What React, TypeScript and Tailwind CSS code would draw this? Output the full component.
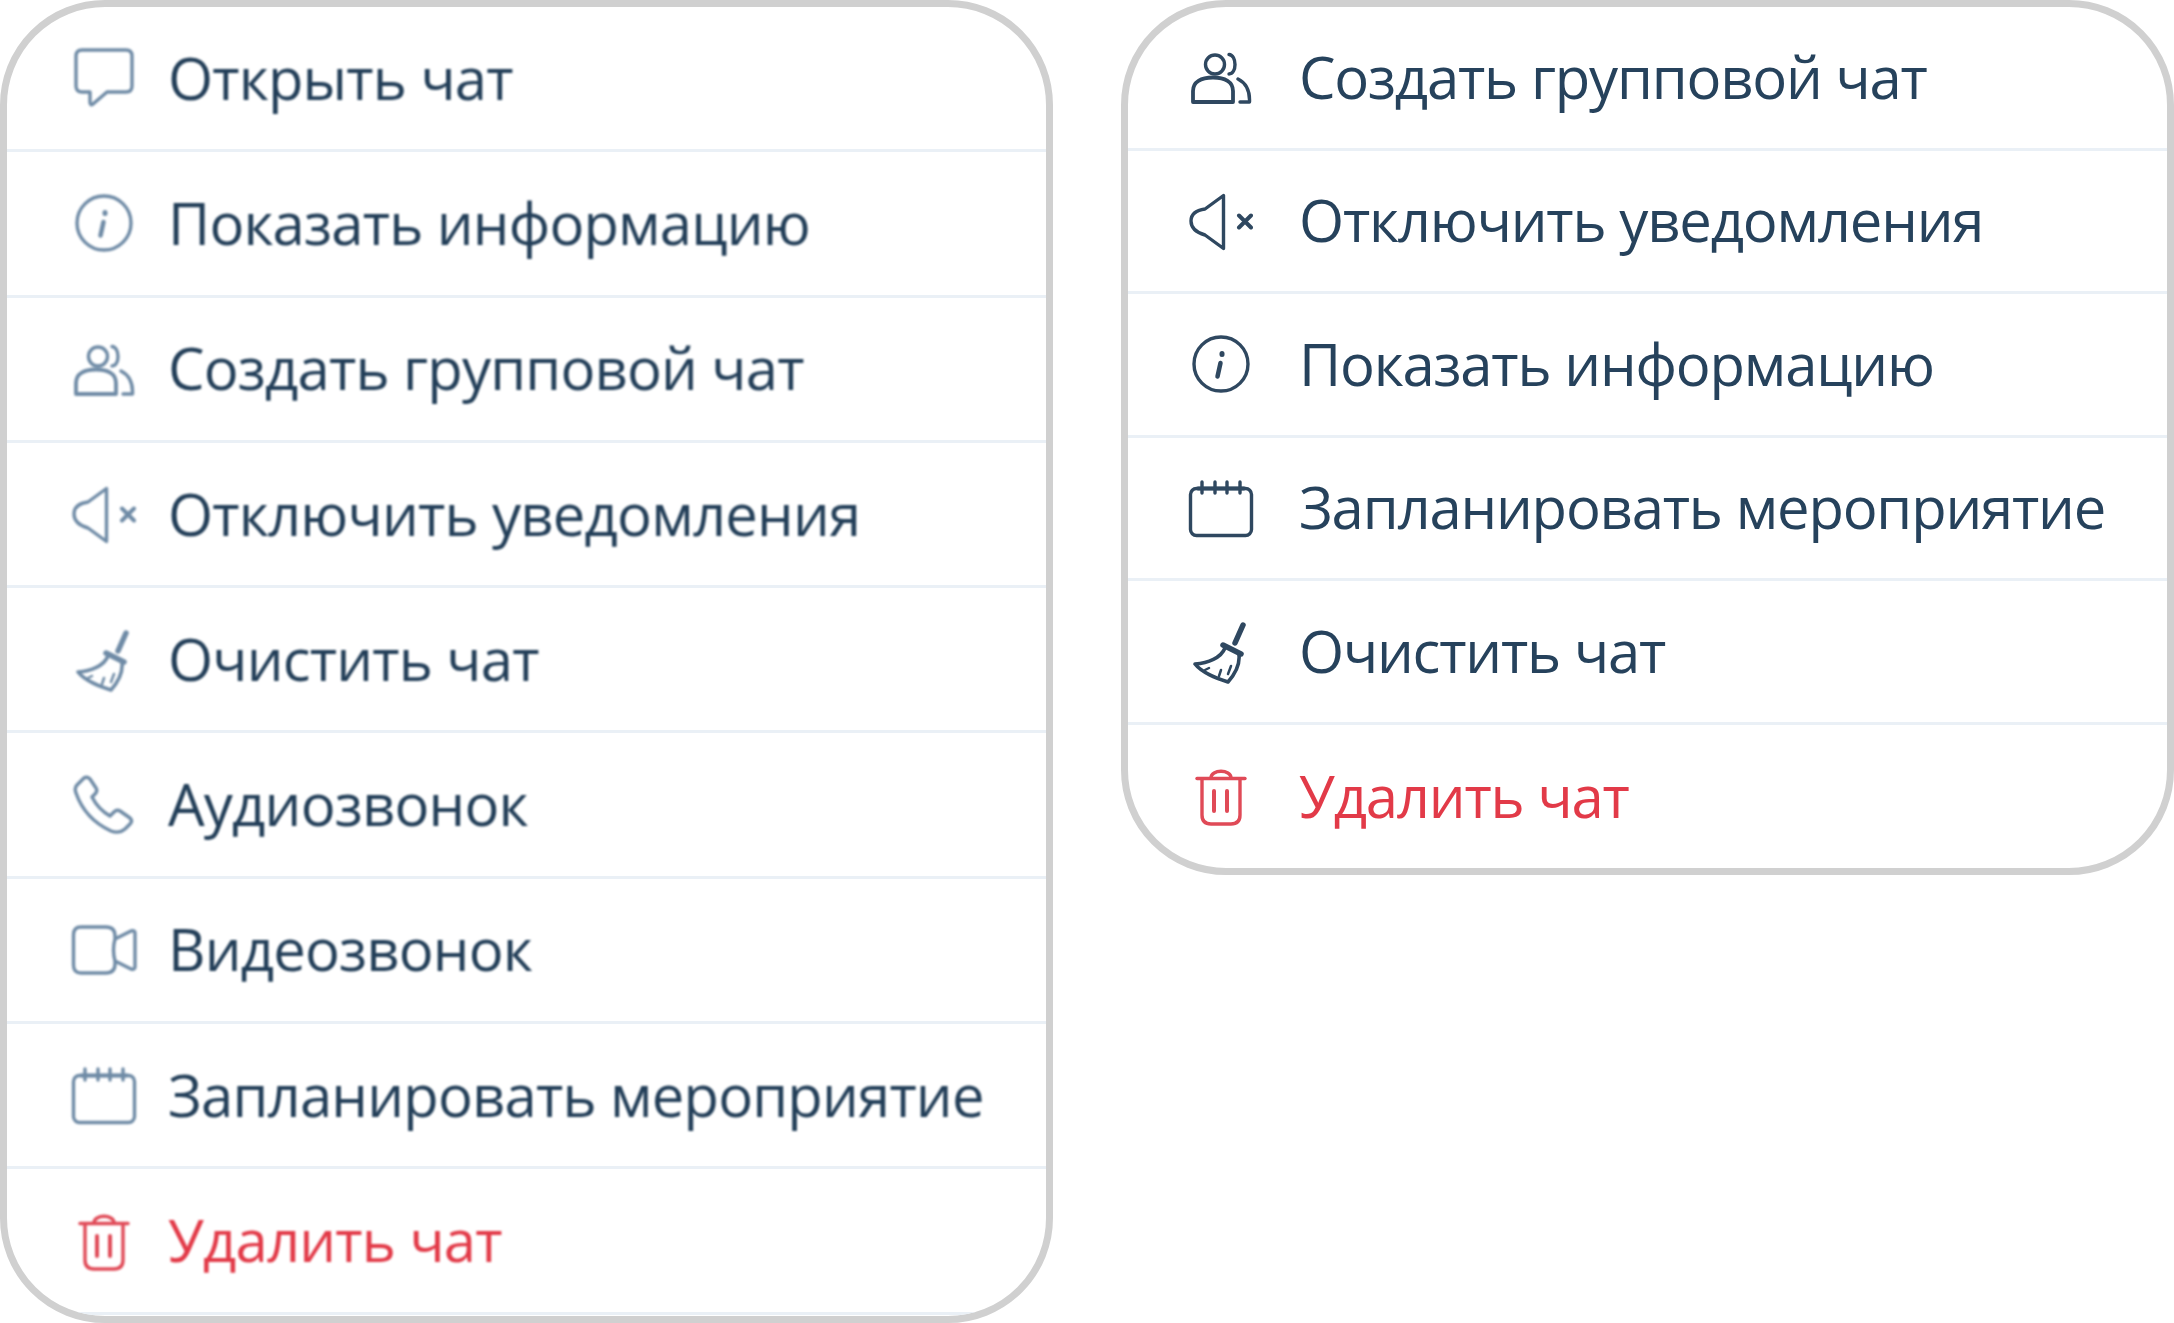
import React from "react";

type IconName = "chat" | "info" | "users" | "mute" | "broom" | "phone" | "video" | "calendar" | "trash";

function Glyph({ name }: { name: IconName }) {
  switch (name) {
    case "chat":
      return <path d="M11 5H55Q61 5 61 11V41Q61 47 55 47H36L22 59Q19 61 19 57V47H11Q5 47 5 41V11Q5 5 11 5Z" />;
    case "info":
      return (
        <>
          <circle cx="33" cy="33" r="27" />
          <path d="M32.5 32 29.5 45.5" strokeWidth="4.5" />
          <path d="M34 22.5v1" strokeWidth="5" />
        </>
      );
    case "users":
      return (
        <>
          <circle cx="27" cy="20.5" r="9.5" />
          <path d="M41 10.5C49 11 49 30 41 30" />
          <path d="M5 58V47C5 38 13 33.5 25 33.5S45 38 45 47V58Z" strokeWidth="3.8" />
          <path d="M50 35C58 39 62 47 61.5 58H52" />
        </>
      );
    case "mute":
      return (
        <>
          <path d="M35.5 7.5V60.5L17 47Q3 43 3 33T17 21Z" />
          <path d="M51 27.5 63 39.5M63 27.5 51 39.5" strokeWidth="4" />
        </>
      );
    case "broom":
      return (
        <>
          <path d="M55 7 47 25" strokeWidth="5.5" />
          <path d="M35 27 53 36" strokeWidth="5.5" />
          <path d="M37 30C33 40 20 45 7 46C14 55 28 60 40 64C47 56 52 47 51 37" strokeWidth="3.6" />
          <path d="M21 50 17 52M33 52 31 58M43 48 40 56" strokeWidth="2.5" />
        </>
      );
    case "phone":
      return <path d="M6 13 13 6Q16 4 19 7L25 16Q27 19 24 22L21 25Q27 37 39 44L43 40Q46 37 49 39L59 46Q62 49 59 52L54 57Q48 62 40 59Q14 47 5 21Q3 16 6 13Z" />;
    case "video":
      return (
        <path d="M10 10H35Q44 10 44 19V22L60 14Q64 13 64 16V50Q64 53 60 52L44 44V47Q44 56 35 56H10Q2.5 56 2.5 48V18Q2.5 10 10 10ZM44 22Q41 33 44 44" />
      );
    case "calendar":
      return (
        <>
          <rect x="2.5" y="13.5" width="61" height="47" rx="6" />
          <path d="M14 7V18M27 7V18M39 7V18M52 7V18" />
          <path d="M10 13.5H56" strokeWidth="4" />
        </>
      );
    case "trash":
      return (
        <>
          <path d="M9 15.5H57" />
          <path d="M23 15C23 6 43 6 43 15" />
          <path d="M14 16V52Q14 61 23 61H43Q52 61 52 52V16" />
          <path d="M26 28V48M39 28V48" strokeWidth="4" />
        </>
      );
  }
}

function Icon({ name, color }: { name: IconName; color: string }) {
  return (
    <svg
      viewBox="0 0 66 66"
      fill="none"
      stroke={color}
      strokeWidth="3.4"
      strokeLinecap="round"
      strokeLinejoin="round"
      className="w-[66px] h-[66px] shrink-0"
    >
      <Glyph name={name} />
    </svg>
  );
}

type Item = { icon: IconName; label: string; danger?: boolean };

const leftItems: Item[] = [
  { icon: "chat", label: "Открыть чат" },
  { icon: "info", label: "Показать информацию" },
  { icon: "users", label: "Создать групповой чат" },
  { icon: "mute", label: "Отключить уведомления" },
  { icon: "broom", label: "Очистить чат" },
  { icon: "phone", label: "Аудиозвонок" },
  { icon: "video", label: "Видеозвонок" },
  { icon: "calendar", label: "Запланировать мероприятие" },
  { icon: "trash", label: "Удалить чат", danger: true },
];

const rightItems: Item[] = [
  { icon: "users", label: "Создать групповой чат" },
  { icon: "mute", label: "Отключить уведомления" },
  { icon: "info", label: "Показать информацию" },
  { icon: "calendar", label: "Запланировать мероприятие" },
  { icon: "broom", label: "Очистить чат" },
  { icon: "trash", label: "Удалить чат", danger: true },
];

export default function App() {
  return (
    <div className="w-[2174px] h-[1323px] bg-white flex items-start justify-between overflow-hidden font-['Open_Sans',sans-serif]">
      <div className="w-[1053px] h-[1323px] flex flex-col border-[7px] border-[#d0d0d0] rounded-[105px] overflow-hidden bg-white">
        {leftItems.map((item) => (
          <div
            key={item.label}
            className="h-[145.3px] shrink-0 flex items-center gap-[31px] pl-[64px] border-b-[3px] border-[#eaf0f6]"
          >
            <div className="blur-[0.8px] flex">
              <Icon name={item.icon} color={item.danger ? "#e04a57" : "#6f8ba6"} />
            </div>
            <span
              className={`text-[58px] leading-none pb-[1px] tracking-[-0.82px] whitespace-nowrap blur-[0.8px] ${
                item.danger ? "text-[#e23a48]" : "text-[#223e58]"
              }`}
            >
              {item.label}
            </span>
          </div>
        ))}
      </div>
      <div className="w-[1053px] h-[875px] flex flex-col border-[7px] border-[#d0d0d0] rounded-[105px] overflow-hidden bg-white">
        {rightItems.map((item, i) => {
          const last = i === rightItems.length - 1;
          return (
            <div
              key={item.label}
              className={`flex items-center gap-[45px] pl-[60px] ${
                last ? "flex-1" : "h-[143.5px] shrink-0 border-b-[3px] border-[#eaf0f6]"
              }`}
            >
              <div className="blur-[0.6px] flex">
                <Icon name={item.icon} color={item.danger ? "#e04a57" : "#2f4860"} />
              </div>
              <span
                className={`text-[58px] leading-none pb-[1px] tracking-[-1.2px] whitespace-nowrap blur-[0.5px] ${
                  item.danger ? "text-[#e23a48]" : "text-[#26425c]"
                }`}
              >
                {item.label}
              </span>
            </div>
          );
        })}
      </div>
    </div>
  );
}
